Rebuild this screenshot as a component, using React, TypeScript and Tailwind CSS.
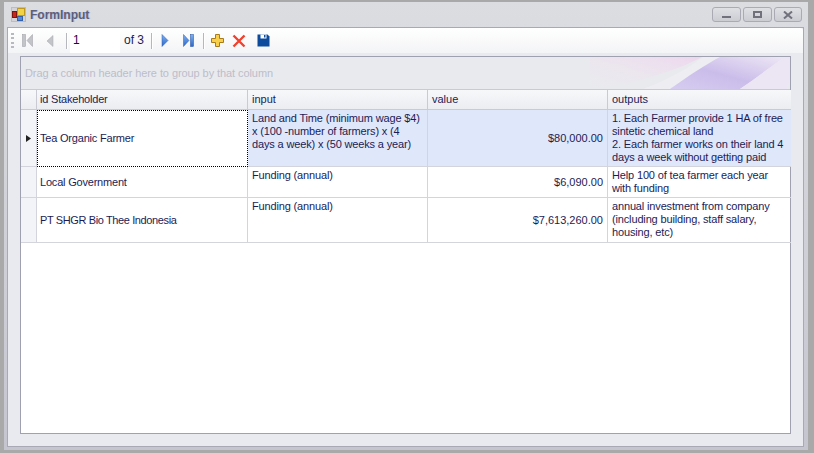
const font = { fontFamily: '"Liberation Sans", sans-serif' };

function WinBtn({ children, w }: { children: React.ReactNode; w: string }) {
  return (
    <div className={w + " h-[15px] rounded-[3px] border border-[#a9aab3] bg-gradient-to-b from-[#dfe0e4] to-[#cccdd3] flex items-center justify-center"}>
      {children}
    </div>
  );
}

function Sep() {
  return <div className="w-[2px] h-[16px] border-l border-[#b5b6be] border-r-white border-r" />;
}

const Cell = "border-r border-b border-[#d3d4dc] pl-[4px] pr-[2px] pt-[2px] text-[#1c1c55] tracking-[-0.15px]";
const Num = "border-r border-b border-[#d3d4dc] pr-[3px] flex items-center justify-end text-[#1c1c55]";
const Cell1 = "border-r border-b border-[#d3d4dc] pl-[3px] flex items-center text-[#1c1c55] tracking-[-0.2px]";
const HCell = "border-r border-b border-[#c9cad4] bg-gradient-to-b from-[#f7f8fa] to-[#ecedf1] pl-[4px] flex items-center text-[#1c1c55]";
const Ind = "border-r border-b border-[#d3d4dc] bg-[#f3f4f7]";

export default function App() {
  return (
    <div style={font} className="w-[814px] h-[453px] bg-[#a9a9a9] pt-[2px] pl-[4px] pr-[6px] pb-[3px] text-[11px] leading-[13px] overflow-hidden">
      <div className="h-[448px] bg-gradient-to-b from-[#dcdde1] to-[#c4c5cf] flex flex-col">
        <div className="h-[25px] shrink-0 flex items-center pl-[7px] pr-[2px]">
          <svg width="15" height="15" viewBox="0 0 15 15" className="mr-[4px]">
            <rect x="0.5" y="0.5" width="14" height="14" fill="#d4d4d8" stroke="#bcbcc2" />
            <rect x="6.5" y="1.5" width="7" height="7" fill="#f2d247" stroke="#c09a20" />
            <rect x="6.5" y="9.5" width="5" height="4" fill="#4d8de0" stroke="#3360a8" />
            <rect x="1.5" y="4.5" width="4" height="6" fill="#c8261c" stroke="#7c1410" />
          </svg>
          <span className="font-bold text-[#5d5e78] text-[12px] pt-[1px] [text-shadow:1px_0_0_#b4bedc]">FormInput</span>
          <div className="ml-auto flex gap-[2px] pr-[4px]">
            <WinBtn w="w-[29px]"><div className="w-[9px] h-[2px] mt-[5px] bg-[#70717b]" /></WinBtn>
            <WinBtn w="w-[29px]"><div className="w-[9px] h-[7px] border-2 border-[#70717b]" /></WinBtn>
            <WinBtn w="w-[28px]">
              <svg width="10" height="8" viewBox="0 0 10 8"><path d="M1 0.5L9 7.5M9 0.5L1 7.5" stroke="#70717b" strokeWidth="2" /></svg>
            </WinBtn>
          </div>
        </div>
        <div className="h-[420px] ml-[3px] mr-[4px] border border-[#a9a9b5] bg-[#e9eaef] flex flex-col">
          <div className="h-[25px] shrink-0 rounded-tr-[3px] bg-gradient-to-b from-white to-[#f3f4f6] flex items-center pl-[3px] text-[#1c1c55]">
            <div className="w-[3px] h-[15px] mr-[8px] flex flex-col justify-between">
              <i className="block h-[2px] bg-[#b8b9c0]" /><i className="block h-[2px] bg-[#b8b9c0]" /><i className="block h-[2px] bg-[#b8b9c0]" /><i className="block h-[2px] bg-[#b8b9c0]" />
            </div>
            <svg width="11" height="13" viewBox="0 0 11 13" className="mr-[13px]">
              <rect x="0.5" y="0.5" width="3" height="12" fill="#c3c4ca" stroke="#9a9ba2" strokeWidth="0.5" />
              <path d="M10.5 0.5V12.5L5 6.5Z" fill="#c3c4ca" stroke="#9a9ba2" strokeWidth="0.5" />
            </svg>
            <svg width="8" height="12" viewBox="0 0 8 12" className="mr-[12px]"><path d="M7 0.5V11.5L1 6Z" fill="#c3c4ca" stroke="#a5a6ad" strokeWidth="0.5" /></svg>
            <Sep />
            <div className="w-[50px] h-[24px] bg-white ml-[2px] pl-[3px] flex items-center text-[12px] text-[#300050]">1</div>
            <span className="ml-[4px] w-[27px] text-[12px]">of 3</span>
            <Sep />
            <svg width="8" height="13" viewBox="0 0 8 13" className="ml-[8px]">
              <defs><linearGradient id="b" x1="0" y1="0" x2="0" y2="1"><stop offset="0" stopColor="#7fb0f0" /><stop offset="1" stopColor="#2d68c8" /></linearGradient></defs>
              <path d="M1 0.5V12.5L7 6.5Z" fill="url(#b)" stroke="#2b5fb4" strokeWidth="0.5" />
            </svg>
            <svg width="11" height="13" viewBox="0 0 11 13" className="ml-[14px] mr-[9px]"><path d="M0.5 0.5V12.5L6 6.5Z" fill="url(#b)" stroke="#2b5fb4" strokeWidth="0.5" /><rect x="7.5" y="0.5" width="3" height="12" fill="url(#b)" stroke="#1f4f9f" strokeWidth="0.5" /></svg>
            <Sep />
            <svg width="13" height="13" viewBox="0 0 13 13" className="ml-[6px]"><path d="M4.5 0.5H8.5V4.5H12.5V8.5H8.5V12.5H4.5V8.5H0.5V4.5H4.5Z" fill="#f7cf4a" stroke="#a87a1c" /></svg>
            <svg width="14" height="14" viewBox="0 0 14 14" className="ml-[8px]"><path d="M1.5 1.5L12.5 12.5M12.5 1.5L1.5 12.5" stroke="#f2402c" strokeWidth="2.4" /></svg>
            <svg width="13" height="13" viewBox="0 0 13 13" className="ml-[11px]"><path d="M0.5 0.5H10.5L12.5 2.5V12.5H0.5Z" fill="#0b4a9c" /><rect x="3.5" y="0.5" width="6" height="4" fill="#fff" /><rect x="7" y="1" width="1.5" height="2.5" fill="#0b4a9c" /></svg>
          </div>
          <div className="flex-1 min-h-0 mt-[3px] mx-[12px] mb-[12px] border border-[#a0a1b0] bg-white flex flex-col">
            <div className="relative h-[33px] shrink-0 border-b border-[#c9cad4] bg-[#e9eaee] flex items-center pl-[4px] text-[#bcbdcb] tracking-[-0.08px] overflow-hidden">
              Drag a column header here to group by that column
              <svg width="200" height="32" viewBox="0 0 200 32" className="absolute right-0 top-0">
                <defs>
                  <linearGradient id="p" x1="0" y1="1" x2="1" y2="0">
                    <stop offset="0" stopColor="#eeeaf1" stopOpacity="0" />
                    <stop offset="1" stopColor="#eed6ee" />
                  </linearGradient>
                  <linearGradient id="l" x1="0" y1="1" x2="1" y2="0">
                    <stop offset="0" stopColor="#d6cdf0" />
                    <stop offset="0.45" stopColor="#cbbdea" />
                    <stop offset="1" stopColor="#eee8f5" />
                  </linearGradient>
                </defs>
                <path d="M0 32C50 26 90 12 112 0H0Z" fill="url(#p)" />
                <path d="M53 32C80 22 100 10 113 0H130C110 10 95 22 80 32Z" fill="#eeeef2" />
                <path d="M80 32C100 18 115 8 130 0H195C180 10 165 22 150 32Z" fill="url(#l)" />
                <path d="M150 32C165 22 180 10 195 0H200V22L197 32Z" fill="#ece6f4" />
              </svg>
            </div>
            <div className="grid grid-cols-[16px_211px_180px_180px_183px] grid-rows-[20px_57px_31px_45px]">
              <div className={HCell} />
              <div className={HCell + " !pl-[3px] tracking-[-0.2px]"}>id Stakeholder</div>
              <div className={HCell}>input</div>
              <div className={HCell}>value</div>
              <div className={HCell + " border-r-0"}>outputs</div>

              <div className={Ind + " flex items-center justify-center"}>
                <svg width="5" height="7" viewBox="0 0 5 7"><path d="M0 0L5 3.5L0 7Z" fill="#222" /></svg>
              </div>
              <div className={Cell1 + " !pl-[2px] !border !border-dotted !border-black"}>Tea Organic Farmer</div>
              <div className={Cell + " bg-[#dfe7fa]"}>Land and Time (minimum wage $4) x (100 -number of farmers) x (4 days a week) x (50 weeks a year)</div>
              <div className={Num + " !pr-[4px] bg-[#dfe7fa]"}>$80,000.00</div>
              <div className={Cell + " bg-[#dfe7fa] border-r-0"}>1. Each Farmer provide 1 HA of free sintetic chemical land<br />2. Each farmer works on their land 4 days a week without getting paid</div>

              <div className={Ind} />
              <div className={Cell1}>Local Government</div>
              <div className={Cell}>Funding (annual)</div>
              <div className={Num + " !pr-[4px]"}>$6,090.00</div>
              <div className={Cell + " border-r-0"}>Help 100 of tea farmer each year with funding</div>

              <div className={Ind} />
              <div className={Cell1 + " tracking-[-0.38px]"}>PT SHGR Bio Thee Indonesia</div>
              <div className={Cell}>Funding (annual)</div>
              <div className={Num + " !pr-[4px]"}>$7,613,260.00</div>
              <div className={Cell + " border-r-0"}>annual investment from company (including building, staff salary, housing, etc)</div>
            </div>
          </div>
        </div>
      </div>
    </div>
  );
}
